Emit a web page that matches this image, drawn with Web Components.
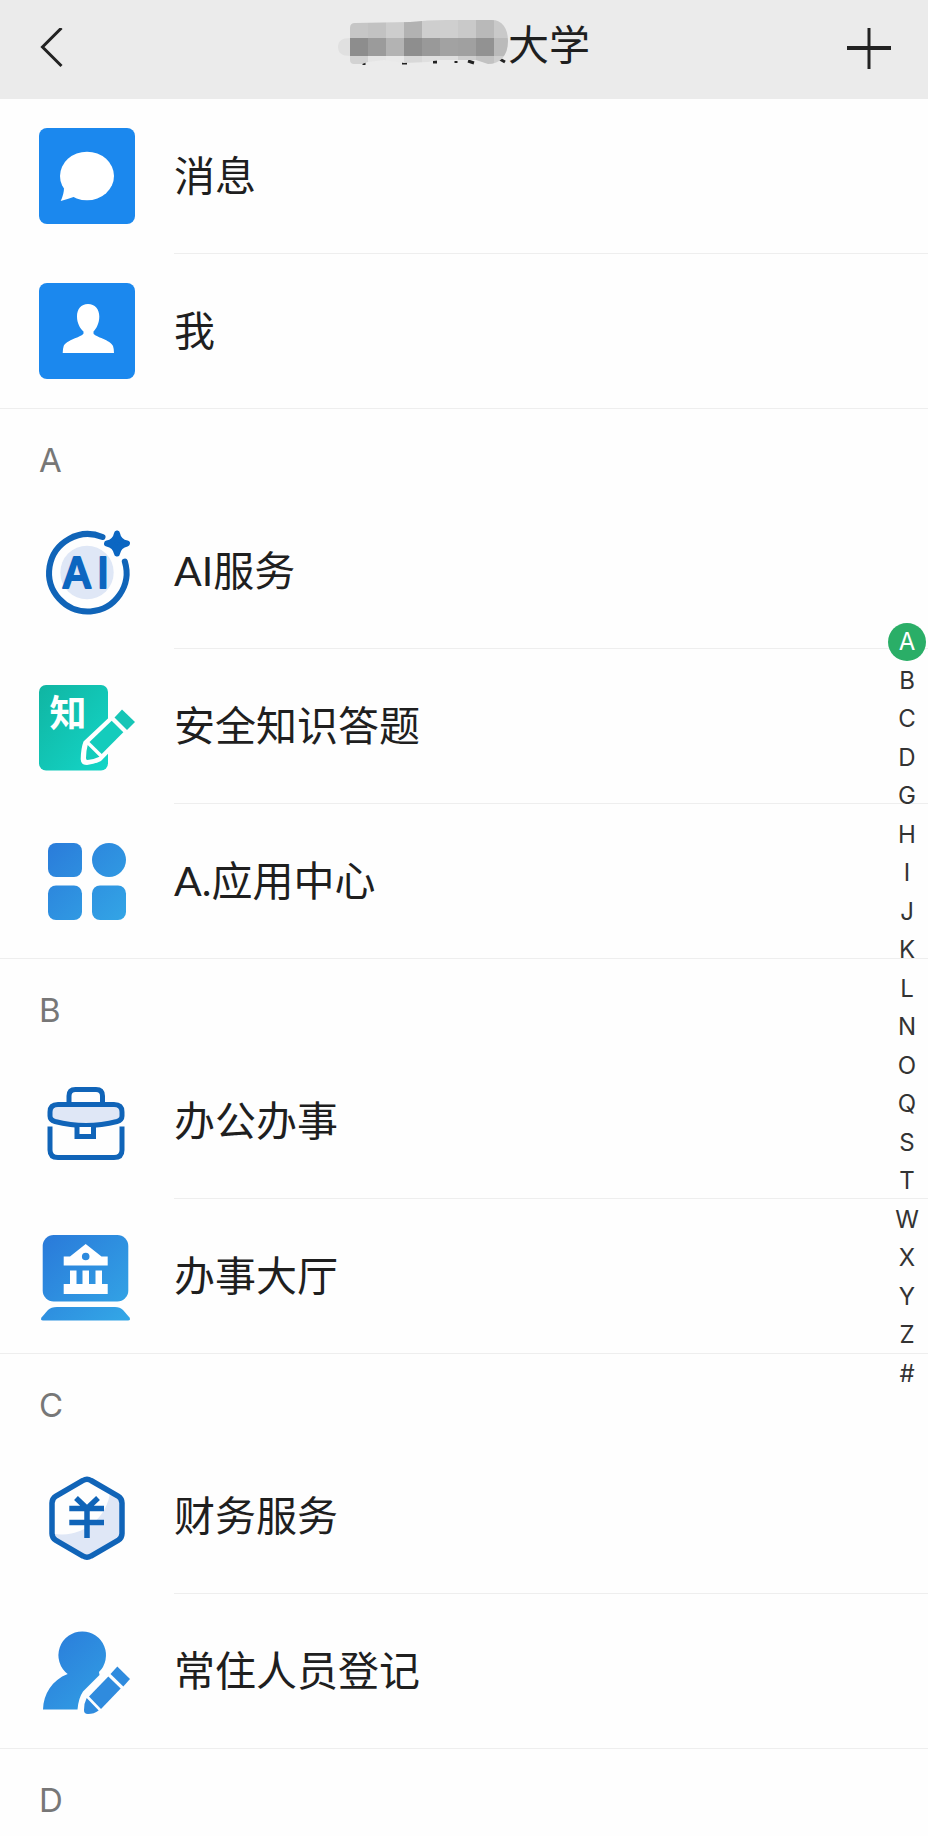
<!DOCTYPE html>
<html lang="zh-CN">
<head>
<meta charset="utf-8">
<meta name="viewport" content="width=device-width, initial-scale=1">
<title>大学</title>
<style>
  body {
    margin: 0;
    min-height: 100vh;
    background: #fefefe;
    color: #1f1f1f;
    font-family: Inter, "Noto Sans CJK SC", sans-serif;
  }
</style>
</head>
<body>
<contact-page>
  <title-bar slot="header">大学</title-bar>
  <contact-section>
    <contact-row icon="chat">消息</contact-row>
    <contact-row icon="me">我</contact-row>
  </contact-section>
  <contact-section letter="A">
    <contact-row icon="ai">AI服务</contact-row>
    <contact-row icon="quiz">安全知识答题</contact-row>
    <contact-row icon="apps">A.应用中心</contact-row>
  </contact-section>
  <contact-section letter="B">
    <contact-row icon="briefcase">办公办事</contact-row>
    <contact-row icon="hall">办事大厅</contact-row>
  </contact-section>
  <contact-section letter="C">
    <contact-row icon="finance">财务服务</contact-row>
    <contact-row icon="register">常住人员登记</contact-row>
  </contact-section>
  <contact-section letter="D"></contact-section>
  <letter-index slot="index" letters="ABCDGHIJKLNOQSTWXYZ#" current="A"></letter-index>
</contact-page>

<script>
const GRADIENT = `<defs><linearGradient id="g" gradientUnits="userSpaceOnUse" x1="8" y1="8" x2="88" y2="90">
  <stop offset="0" stop-color="#2a7bda"/><stop offset="1" stop-color="#33a6e6"/></linearGradient></defs>`;

const ICONS = {
  chat: `<rect width="96" height="96" rx="8" fill="#1b88ee"/>
    <ellipse cx="48" cy="48" rx="27" ry="24.3" fill="#fff"/>
    <path d="M25 60Q25 66 21.700 73Q29 71 36 68.500Z" fill="#fff"/>`,
  me: `<rect width="96" height="96" rx="8" fill="#1b88ee"/>
    <path d="M49 21C56 21 60.300 26 60.300 33.500C60.300 40 57.500 45.500 54.500 48.500V50.500C56 54 72 57 74 63Q75 66 75 70H23.700Q23.700 66 24.700 63C27 57 43 54 44.500 50.500V48.500C41 45.500 38 40 38 33.500C38 26 42 21 49 21Z" fill="#fff"/>`,
  ai: `<circle cx="48" cy="49.5" r="26.7" fill="#dfe7f6"/>
    <path d="M63.500 14A38.700 38.700 0 1 0 85.800 38.500" fill="none" stroke="#1064b8" stroke-width="6" stroke-linecap="round"/>
    <path d="M78 10.500Q79.500 18.800 88 20.500Q79.500 22.200 78 30.500Q76.500 22.200 68 20.500Q76.500 18.800 78 10.500Z" fill="#0b66c2" stroke="#0b66c2" stroke-width="6" stroke-linejoin="round"/>
    <g fill="#0d66c0" stroke="#0d66c0" stroke-width="2" stroke-linejoin="round" font-family="Inter, sans-serif" font-weight="500" font-size="42" text-anchor="middle"><text x="38" y="65">A</text><text x="64" y="65">I</text></g>`,
  quiz: `<defs><linearGradient id="t" x1="0" y1="0" x2="1" y2="1"><stop offset="0" stop-color="#10b5a2"/><stop offset="1" stop-color="#14d6c8"/></linearGradient></defs>
    <rect y="7" width="69" height="85.500" rx="7" fill="url(#t)"/>
    <text x="29" y="49" font-family="Noto Sans CJK SC, sans-serif" font-weight="700" font-size="37" text-anchor="middle" fill="#fff">知</text>
    <path d="M70.500 39L87.700 56.500L62 83Q56 86 48 87Q41.500 87 41.700 81Q42 70 44.500 63.500Z" fill="#fff"/>
    <path d="M72.700 42.800L84.300 54.300L62.700 76L50.500 64Z" fill="#14ccbc"/>
    <path d="M48.700 67L60.500 78.800Q55 81.500 48.500 82Q46.800 82 47 80Q47 73 48.700 67Z" fill="#14ccbc"/>
    <path d="M83 31.500L96 44L88 52L75.500 39.500Z" fill="#16c5b6"/>`,
  apps: `${GRADIENT}<g fill="url(#g)"><rect x="9" y="10" width="34" height="34" rx="8"/><circle cx="70" cy="27" r="17"/>
    <rect x="9" y="52.500" width="34" height="34.500" rx="8"/><rect x="53" y="52.500" width="34" height="34.500" rx="8"/></g>`,
  briefcase: `<g fill="none" stroke="#1064b8" stroke-width="5">
    <path d="M30 31V23Q30 16.500 36.500 16.500H57Q63.500 16.500 63.500 23V31"/>
    <path d="M11 53.500V77Q11 84.500 19 84.500H75Q83 84.500 83 77V53.500"/>
    <path d="M19 31.500H75Q83 31.500 83 39V43Q83 47 78 48.500Q47 56.500 16 48.500Q11 47 11 43V39Q11 31.500 19 31.500Z" fill="#dfe7f6"/>
    <path d="M38 54V63.500H54.500V54" fill="#fff"/></g>`,
  hall: `${GRADIENT}<g fill="url(#g)"><rect x="3.700" y="7" width="85.600" height="66.500" rx="11"/>
    <path d="M18 79H76Q81 79 84 82L90.500 89.500Q92 92.500 89 92.500H4Q1 92.500 2.500 89.500L9 82Q12 79 18 79Z"/></g>
    <path fill="#fff" fill-rule="evenodd" d="M24.700 28.500H31L46.700 16L62.500 28.500H68.700V37.500H24.700ZM46.700 24.700A3.800 3.800 0 1 0 46.700 32.300A3.800 3.800 0 1 0 46.700 24.700Z"/>
    <path fill="#fff" d="M31 42.500H37.500V56H43.500V42.500H50V56H56.500V42.500H63V56H68.700V66H24.700V56H31Z"/>`,
  finance: `<defs><clipPath id="h"><path d="M48 11L83 31V69L48 89L13 69V31Z"/></clipPath></defs>
    <g clip-path="url(#h)"><rect width="96" height="96" fill="#dfe7f6"/><circle cx="23" cy="18" r="48.500" fill="#fefefe"/></g>
    <path d="M52 12.500L79 28Q83 30.500 83 35V65.500Q83 70 79 72.500L52 88Q48 90.500 44 88L17 72.500Q13 70 13 65.500V35Q13 30.500 17 28L44 12.500Q48 10 52 12.500Z" fill="none" stroke="#1064b8" stroke-width="5.500"/>
    <path d="M37 30L48 40.500L59 30M30.300 40.500H65M30.300 54.500H65M48 40V70" fill="none" stroke="#1064b8" stroke-width="5.500"/>`,
  register: `${GRADIENT}<path fill="url(#g)" d="M43.500 8.500A23.700 23.700 0 0 1 60 49L60.500 52L44 68.500Q39.500 75 38.500 86.500H4C4.500 71 13 57 28.700 51A23.700 23.700 0 0 1 43.500 8.500Z"/>
    <g fill="#2f8bde"><path d="M69.300 53.500L81.700 65.500L62 86L50 73.500Z"/><path d="M47.700 75L59.700 87.500Q55 91 49 91Q44.800 91 45 87Q45 80 47.700 75Z"/>
    <path d="M78.300 43.500L91 56L84.300 63.500L71.500 51Z"/></g>`
};

/* Base class: renders the subclass's markup into an open shadow root. */
class View extends HTMLElement {
  connectedCallback() {
    if (this.shadowRoot) return;
    this.attachShadow({ mode: "open" }).innerHTML = this.render();
  }
}

customElements.define("contact-page", class extends View {
  render() {
    return `<style>
      :host { display: block; position: relative; }
      .index { position: absolute; top: 623px; right: 2px; }
    </style>
    <slot name="header"></slot>
    <main><slot></slot></main>
    <div class="index"><slot name="index"></slot></div>`;
  }
});

customElements.define("title-bar", class extends View {
  render() {
    // Censored part of the name: 18px tiles, one grey level each.
    const x = [12, 30, 48, 66, 84, 102, 120, 138, 156];
    const rows = [
      [20, 18, ["c6c6c6", "c2c2c2", "cdcdcd", "b2b2b2", "cecece", "cfcfcf", "c9c9c9", "b9b9b9", "c9c9c9"]],
      [38, 18, ["8d8d8d", "9b9b9b", "b3b3b3", "8e8e8e", "999999", "a2a2a2", "a0a0a0", "929292", "bababa"]],
      [56, 8, ["d2d2d2", "e5e5e5", "e9e9e9", "d8d8d8", "dfdfdf", "dedede", "cecece", "c2c2c2", "cecece"]]
    ];
    const tiles = rows.map(([y, h, c]) => c.map((f, i) =>
      `<rect x="${x[i]}" y="${y}" width="18" height="${h}" fill="#${f}"/>`).join("")).join("");
    return `<style>
      :host { display: block; background: #ebebeb; }
      header { display: flex; align-items: center; justify-content: space-between; height: 99px; padding: 0 37px; }
      button { width: 44px; height: 44px; padding: 0; border: 0; background: none; color: #222; }
      button svg { display: block; }
      h1 { display: flex; align-items: flex-start; margin: 0; font-size: 41px; line-height: 90px; font-weight: 400; }
      h1 svg { display: block; }
    </style>
    <header>
      <button type="button" aria-label="返回"><svg width="44" height="44" viewBox="0 0 44 44" fill="none" stroke="currentColor" stroke-width="3"><path d="M24.500 0L5.500 19L24.500 38"/></svg></button>
      <h1><svg width="170" height="99" viewBox="0 0 170 99" aria-hidden="true">
        <path d="M26 62V65M64 63H69M95 62H99M118 61V63M130 61L136 63M158 57L167 62" stroke="#222" stroke-width="3" fill="none"/>
        <defs><clipPath id="m"><path d="M12 28Q12 23 17 23L72 22Q90 20 108 20H154C164 20 170 28 170 41C170 56 162 64 150 64L138 60H100L90 62L66 63L46 60L30 62L24 64H16Q12 64 12 60V56Q0 56 0 47Q0 38 12 38Z"/></clipPath></defs>
        <g clip-path="url(#m)"><rect y="38" width="12" height="18" fill="#e0e0e0"/>${tiles}</g>
      </svg><slot></slot></h1>
      <button type="button" aria-label="添加"><svg width="44" height="44" viewBox="0 0 44 44" fill="none" stroke="currentColor"><path d="M0 20H44" stroke-width="4"/><path d="M22 -1V41" stroke-width="3"/></svg></button>
    </header>`;
  }
});

customElements.define("contact-section", class extends View {
  render() {
    const letter = this.getAttribute("letter");
    return `<style>
      :host { display: block; }
      h2 { margin: 0; padding: 30px 39px 13px; font-size: 33px; line-height: 42px; font-weight: 400; color: #777; }
      ::slotted(:last-child) { --divider-inset: 0px; }
    </style>
    <section>${letter ? `<h2 id="${letter}">${letter}</h2>` : ""}<slot></slot></section>`;
  }
});

customElements.define("contact-row", class extends View {
  render() {
    return `<style>
      :host { display: block; }
      a { display: flex; align-items: center; gap: 39px; height: 154px; padding: 0 39px; color: inherit; text-decoration: none; font: 41px/60px Lato, "Noto Sans CJK SC", sans-serif; }
      svg { display: block; flex: none; overflow: visible; }
      hr { margin: 0 0 0 var(--divider-inset, 174px); border: 0; height: 1px; background: #eee; }
    </style>
    <a href="#"><svg width="96" height="96" viewBox="0 0 96 96" aria-hidden="true">${ICONS[this.getAttribute("icon")]}</svg><span><slot></slot></span></a>
    <hr>`;
  }
});

customElements.define("letter-index", class extends View {
  render() {
    const current = this.getAttribute("current");
    const links = [...this.getAttribute("letters")].map(l =>
      `<a href="#"${l === current ? ' aria-current="true"' : ""}>${l}</a>`).join("");
    return `<style>
      :host { display: block; }
      nav { display: flex; flex-direction: column; justify-content: space-between; height: 770px; }
      a { width: 38px; height: 38px; line-height: 38px; border-radius: 50%; text-align: center; font-size: 24px; color: #333; text-decoration: none; }
      a[aria-current] { background: #2aae67; color: #fff; }
    </style>
    <nav aria-label="字母索引">${links}</nav>`;
  }
});
</script>
</body>
</html>
